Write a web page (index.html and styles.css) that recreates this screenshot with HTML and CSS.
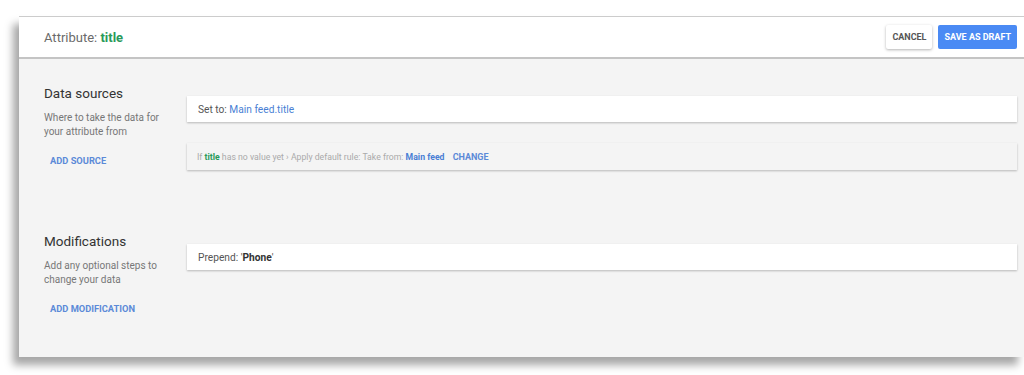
FILE: index.html
```html
<!DOCTYPE html>
<html lang="en">
<head>
    <meta charset="UTF-8">
    <meta name="viewport" content="width=device-width, initial-scale=1.0">
    <title>Attribute: title</title>
    <link rel="stylesheet" href="styles.css">
</head>
<body>
    <div class="panel">
        <header class="panel-header">
            <h1 class="attr-title">Attribute: <span class="green">title</span></h1>
            <div class="actions">
                <button class="btn btn-cancel">CANCEL</button>
                <button class="btn btn-save">SAVE AS DRAFT</button>
            </div>
        </header>
        <main class="panel-body">
            <section class="section section-sources">
                <div class="side">
                    <h2>Data sources</h2>
                    <p class="desc">Where to take the data for<br>your attribute from</p>
                    <a href="#" class="link">ADD SOURCE</a>
                </div>
                <div class="cards">
                    <div class="card"><span>Set to: <span class="blue">Main feed.title</span></span></div>
                    <div class="card card-rule">
                        <span>If <b class="green">title</b> has no value yet &rsaquo; Apply default rule: Take from: <b class="blue">Main feed</b> <a href="#" class="change">CHANGE</a></span>
                    </div>
                </div>
            </section>
            <section class="section">
                <div class="side">
                    <h2>Modifications</h2>
                    <p class="desc">Add any optional steps to<br>change your data</p>
                    <a href="#" class="link">ADD MODIFICATION</a>
                </div>
                <div class="cards">
                    <div class="card"><span>Prepend: '<b class="dark">Phone</b>'</span></div>
                </div>
            </section>
        </main>
    </div>
</body>
</html>
```

FILE: styles.css
```css
body {
    margin: 0;
    padding: 0 0 20px;
    background-color: #fff;
    font-family: Roboto, "Liberation Sans", Arial, sans-serif;
    color: #555;
}

.panel {
    margin: 16px 0 0 19px;
    height: 341px;
    background-color: #f4f4f4;
    border-top: 1px solid #ccc;
    box-sizing: border-box;
    box-shadow: -6px 8px 8px rgba(0, 0, 0, 0.35);
}

.panel-header {
    height: 40px;
    background-color: #fff;
    border-bottom: 2px solid #c4c4c4;
    display: flex;
    align-items: center;
    padding: 0 7px 0 25px;
}

.attr-title {
    margin: 0;
    font-size: 13px;
    font-weight: 400;
    color: #6a6a6a;
}

.green {
    color: #2a9a5a;
    font-weight: 700;
}

.blue {
    color: #4a7fd4;
}

.dark {
    color: #333;
}

.actions {
    margin-left: auto;
    display: flex;
    gap: 6px;
    align-items: center;
}

.btn {
    border: none;
    border-radius: 2px;
    font-family: inherit;
    font-size: 9px;
    font-weight: 700;
    height: 24px;
    padding: 0 6px;
    cursor: pointer;
}

.btn-cancel {
    background-color: #fff;
    color: #555;
    box-shadow: 0 1px 3px rgba(0, 0, 0, 0.3);
}

.btn-save {
    background-color: #4a8af4;
    color: #fff;
}

.panel-body {
    padding-top: 25px;
}

.section {
    display: grid;
    grid-template-columns: 168px 1fr;
}

.section-sources {
    margin-bottom: 62px;
}

.side {
    padding-left: 25px;
}

h2 {
    margin: 0;
    font-size: 13.5px;
    line-height: 18px;
    font-weight: 400;
    color: #333;
}

.desc {
    margin: 9px 0 17px;
    font-size: 10px;
    line-height: 13.5px;
    color: #777;
}

.link {
    display: block;
    margin-left: 6px;
    font-size: 9.3px;
    line-height: 12px;
    font-weight: 700;
    color: #5b8ad8;
    text-decoration: none;
}

.cards {
    padding: 12px 7px 0 0;
}

.card {
    height: 26px;
    background-color: #fff;
    box-shadow: 0 1px 2px rgba(0, 0, 0, 0.25);
    display: flex;
    align-items: center;
    padding-left: 11px;
    font-size: 10.2px;
    color: #555;
}

.card-rule {
    margin-top: 21px;
    height: 27px;
    background-color: #f4f4f4;
    font-size: 8.7px;
    color: #aaa;
    padding-left: 10px;
}

.change {
    margin-left: 6px;
    font-size: 9px;
    font-weight: 700;
    color: #5b8ad8;
    text-decoration: none;
}
```
